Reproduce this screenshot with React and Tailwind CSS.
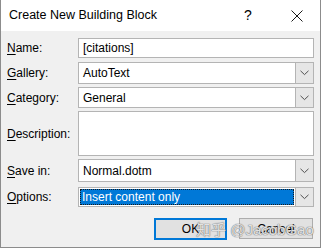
import React from 'react';

const FONT = { fontFamily: '"Liberation Sans", "Noto Sans CJK SC", sans-serif' };

function Label({ hot, rest }) {
  return (
    <div className="w-[71px] text-[12px] text-black">
      <span className="underline underline-offset-2">{hot}</span>
      {rest}
    </div>
  );
}

function Chevron() {
  return (
    <svg width="9" height="6" viewBox="0 0 9 6" className="text-[#505050]">
      <path d="M0.5 0.8 L4.5 4.6 L8.5 0.8" fill="none" stroke="currentColor" strokeWidth="1" />
    </svg>
  );
}

function Combo({ value, h = 'h-[21px]', selected }) {
  return (
    <div className={`flex ${h} w-[236px] border border-[#b4b4b4] bg-white`}>
      <div className="flex flex-1 items-center p-[1px]">
        {selected ? (
          <div className="flex h-full w-full items-center border border-dotted border-[#1a1a1a] bg-[#0078d7] pl-[1px] text-[12px] text-white">
            {value}
          </div>
        ) : (
          <div className="pl-[3px] text-[12px] text-black">{value}</div>
        )}
      </div>
      <div className="flex w-[18px] items-center justify-center border-l border-[#b4b4b4] bg-[#e6e6e6]">
        <Chevron />
      </div>
    </div>
  );
}

export default function App() {
  return (
    <div className="relative h-[248px] w-[321px] overflow-hidden bg-[#f0f0f0]" style={FONT}>
      <div className="flex h-[248px] flex-col border-x border-b border-[#8c8c8c]">
        {/* Title bar */}
        <div className="flex h-[31px] items-center bg-white pl-[8px] text-[12.5px] text-black">
          <span className="flex-1">Create New Building Block</span>
          <span className="w-[47px] text-[14px]">?</span>
          <svg width="12" height="12" viewBox="0 0 12 12" className="mr-[17px]">
            <path d="M0.5 0.5 L11.5 11.5 M11.5 0.5 L0.5 11.5" stroke="#1a1a1a" strokeWidth="1" />
          </svg>
        </div>

        {/* Form */}
        <div className="flex flex-col pl-[6px] pt-[7px]">
          <div className="flex items-center">
            <Label hot="N" rest="ame:" />
            <div className="flex h-[20px] w-[236px] items-center border border-[#b4b4b4] bg-white pl-[4px] text-[12px]">
              [citations]
            </div>
          </div>
          <div className="mt-[4px] flex items-center">
            <Label hot="G" rest="allery:" />
            <Combo value="AutoText" h="h-[22px]" />
          </div>
          <div className="mt-[3px] flex items-center">
            <Label hot="C" rest="ategory:" />
            <Combo value="General" />
          </div>
          <div className="mt-[3px] flex items-center">
            <Label hot="D" rest="escription:" />
            <div className="h-[45px] w-[236px] border border-[#b4b4b4] bg-white" />
          </div>
          <div className="mt-[3px] flex items-center">
            <Label hot="S" rest="ave in:" />
            <Combo value="Normal.dotm" h="h-[23px]" />
          </div>
          <div className="mt-[5px] flex items-center">
            <Label hot="O" rest="ptions:" />
            <Combo value="Insert content only" h="h-[20px]" selected />
          </div>

          {/* Buttons */}
          <div className="mt-[11px] flex justify-end gap-[12px] pr-[7px]">
            <div className="flex h-[22px] w-[73px] items-center justify-center border-2 border-[#0078d7] bg-[#e1e1e1] text-[12px]">
              OK
            </div>
            <div className="flex h-[21px] w-[74px] items-center justify-center border border-[#adadad] bg-[#e1e1e1] text-[12px]">
              Cancel
            </div>
          </div>
        </div>
      </div>

      {/* Watermark */}
      <div
        className="absolute left-[196px] top-[219px] text-[15px] text-white/80"
        style={{ textShadow: '0 0 1px #666, 0 0 1px #666' }}
      >
        知乎 @JacobGao
      </div>
    </div>
  );
}
